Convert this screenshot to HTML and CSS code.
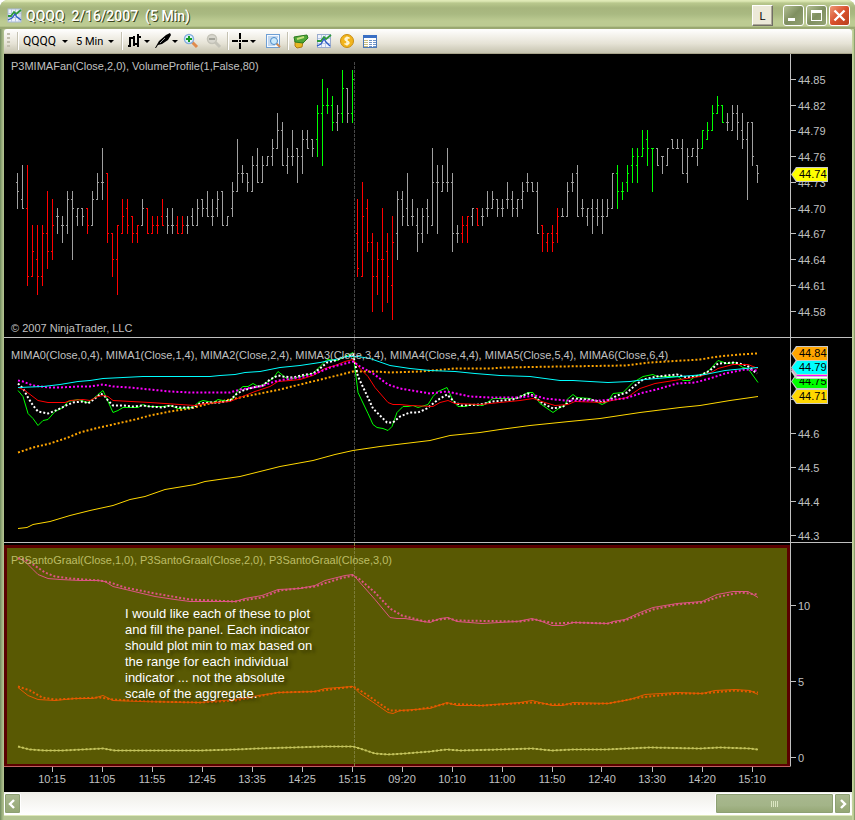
FILE: index.html
```
<!DOCTYPE html>
<html lang="en">
<head>
  <meta charset="UTF-8">
  <title>QQQQ 2/16/2007 (5 Min)</title>
  <link rel="stylesheet" href="styles.css">
</head>
<body>
<div class="window">
  <header class="titlebar">
    <svg class="app-icon" width="15" height="15" viewBox="0 0 15 15">
      <rect x="1" y="1" width="13" height="13" fill="#eef2fb" stroke="#a9b9d8"/>
      <path d="M4.500 1v13M8.500 1v13M12 1v13M1 5.500h13M1 9.500h13" stroke="#b9c8e4" fill="none"/>
      <path d="M1 8L4 8 7 4 9 6 14 2" stroke="#2f9a3a" stroke-width="1.800" fill="none"/>
      <path d="M1 12L5 10 8 6 10 9 14 12" stroke="#2a59c4" stroke-width="1.300" fill="none"/>
    </svg>
    <h1>QQQQ&nbsp; 2/16/2007&nbsp; (5 Min)</h1>
    <button class="link-btn">L</button>
    <button class="win-btn" aria-label="Minimize">
      <svg width="21" height="21" viewBox="0 0 21 21"><rect x="5" y="13" width="7" height="3" fill="#fff"/></svg>
    </button>
    <button class="win-btn" aria-label="Maximize">
      <svg width="21" height="21" viewBox="0 0 21 21"><path d="M5 5h11v11H5zM6 8v7h9V8z" fill="#fff" fill-rule="evenodd"/></svg>
    </button>
    <button class="win-btn close" aria-label="Close">
      <svg width="21" height="21" viewBox="0 0 21 21"><path d="M5.500 5.500l10 10M15.500 5.500l-10 10" stroke="#fff" stroke-width="2.400"/></svg>
    </button>
  </header>

  <nav class="toolbar">
    <span class="grip"></span>
    <span class="sep"></span>
    <label class="drop instrument"><select aria-label="Instrument"><option>QQQQ</option></select></label>
    <label class="drop interval"><select aria-label="Interval"><option>5 Min</option></select></label>
    <span class="sep"></span>
    <button class="tool arrow" aria-label="Chart style">
      <svg width="16" height="16" viewBox="0 0 16 16"><path d="M3 4v10M1 13h2M3 5h4M7 3v10M7 11h3M11 1v13M10 7h2M11 4h3" stroke="#000" stroke-width="2" fill="none"/></svg>
    </button>
    <button class="tool arrow" aria-label="Drawing tools">
      <svg width="16" height="16" viewBox="0 0 16 16"><path d="M0 15L4 8 11 2 15 0 16 2 13 7 7 11 3 12 1 15z" fill="#000"/><path d="M5 10l5-5" stroke="#999" stroke-width="1"/></svg>
    </button>
    <button class="tool" aria-label="Zoom in">
      <svg width="16" height="16" viewBox="0 0 16 16"><path d="M9 9l5 5" stroke="#e08a4c" stroke-width="3"/><circle cx="6" cy="6" r="4.500" fill="#e2f3fd" stroke="#85aede" stroke-width="1.500"/><path d="M6 3v6M3 6h6" stroke="#159a28" stroke-width="2"/></svg>
    </button>
    <button class="tool" aria-label="Zoom out" disabled>
      <svg width="16" height="16" viewBox="0 0 16 16"><path d="M9 9l5 5" stroke="#c4c3b8" stroke-width="3"/><circle cx="6" cy="6" r="4.500" fill="#d8d7ce" stroke="#c4c3b8" stroke-width="1.500"/><path d="M3 6h6" stroke="#a3a39a" stroke-width="2"/></svg>
    </button>
    <span class="sep"></span>
    <button class="tool arrow cross" aria-label="Cross hair">
      <svg width="18" height="16" viewBox="0 0 18 16"><path d="M9 0v6M9 10v6M1 8h6M11 8h6" stroke="#000" stroke-width="2"/><rect x="8" y="7" width="2" height="2"/></svg>
    </button>
    <button class="tool" aria-label="Data box">
      <svg width="16" height="16" viewBox="0 0 16 16"><rect x="1.500" y="1.500" width="13" height="13" fill="#f4f9ff" stroke="#6f9fd4"/><path d="M3 4h10M3 6h3M3 8h3M3 10h3M3 12h7" stroke="#93b7de"/><path d="M11 10l4 4" stroke="#cf8a55" stroke-width="2"/><circle cx="9" cy="8" r="3.500" fill="#cbe9fb" stroke="#4b8ac9"/></svg>
    </button>
    <span class="sep"></span>
    <button class="tool" aria-label="Strategies">
      <svg width="16" height="16" viewBox="0 0 16 16"><path d="M2 8l5-1 3 2-1 5-5 1-2-2z" fill="#e8b823" stroke="#b07c12"/><path d="M1 4l6-1 7-1 1 3-5 5-8-1z" fill="#4ea636" stroke="#2c7a20"/><path d="M4 6l7-2" stroke="#c5e07b" stroke-width="2"/></svg>
    </button>
    <button class="tool" aria-label="Indicators">
      <svg width="16" height="16" viewBox="0 0 16 16"><rect x="1.500" y="1.500" width="13" height="13" fill="#eef2fb" stroke="#9aaccf"/><path d="M5.500 2v12M9.500 2v12M2 5.500h12M2 10.500h12" stroke="#b9c8e4"/><path d="M1 8L5 8 8 4 10 6 15 2" stroke="#2f9a3a" stroke-width="1.800" fill="none"/><path d="M1 13L5 11 8 6 10 9 14 13" stroke="#2a59c4" stroke-width="1.300" fill="none"/></svg>
    </button>
    <button class="tool" aria-label="Account">
      <svg width="16" height="16" viewBox="0 0 16 16"><circle cx="8" cy="8" r="6.500" fill="#f2b51d" stroke="#c98d12"/><path d="M10.500 5.500C9 4 6 4.500 6 6.300 6 8 10 7.700 10 9.800 10 11.500 7 11.800 5.500 10.500M8 3.500v9" stroke="#fff8d8" stroke-width="1.500" fill="none"/></svg>
    </button>
    <button class="tool" aria-label="Properties">
      <svg width="16" height="16" viewBox="0 0 16 16"><rect x="1.500" y="2.500" width="13" height="12" fill="#fff" stroke="#4d79b8"/><rect x="1" y="2" width="14" height="3" fill="#3a6fc4"/><path d="M2 7.500h4M2 9.500h4M2 11.500h4M2 13.500h4" stroke="#c8bd7c"/><path d="M7 7.500h3M7 9.500h3M7 11.500h3M7 13.500h3M11 7.500h3M11 9.500h3M11 11.500h3M11 13.500h3" stroke="#6f93c8"/></svg>
    </button>
  </nav>

  <main class="chart">
    <section class="plot price">
      <svg id="price" viewBox="4 54 786 283" preserveAspectRatio="none"></svg>
      <p class="legend">P3MIMAFan(Close,2,0), VolumeProfile(1,False,80)</p>
      <p class="copyright">© 2007 NinjaTrader, LLC</p>
    </section>
    <div class="axis" id="priceAxis"></div>

    <section class="plot mima">
      <svg id="mima" viewBox="4 338 786 204" preserveAspectRatio="none"></svg>
      <p class="legend">MIMA0(Close,0,4), MIMA1(Close,1,4), MIMA2(Close,2,4), MIMA3(Close,3,4), MIMA4(Close,4,4), MIMA5(Close,5,4), MIMA6(Close,6,4)</p>
    </section>
    <div class="axis" id="mimaAxis"></div>

    <section class="plot graal">
      <svg id="graal" viewBox="4 543 786 223" preserveAspectRatio="none"></svg>
      <p class="legend">P3SantoGraal(Close,1,0), P3SantoGraal(Close,2,0), P3SantoGraal(Close,3,0)</p>
      <p class="note">I would like each of these to plot<br>and fill the panel. Each indicator<br>should plot min to max based on<br>the range for each individual<br>indicator ... not the absolute<br>scale of the aggregate.</p>
    </section>
    <div class="axis last" id="graalAxis"></div>

    <div class="times" id="times"></div>
  </main>

  <div class="scrollbar">
    <button class="scroll-btn" aria-label="Scroll left">
      <svg width="9" height="10" viewBox="0 0 9 10"><path d="M6 1L2 5l4 4" stroke="#fff" stroke-width="2.400" fill="none"/></svg>
    </button>
    <div class="track">
      <div class="thumb"><i></i><i></i><i></i><i></i></div>
    </div>
    <button class="scroll-btn" aria-label="Scroll right">
      <svg width="9" height="10" viewBox="0 0 9 10"><path d="M3 1l4 4-4 4" stroke="#fff" stroke-width="2.400" fill="none"/></svg>
    </button>
  </div>
</div>
<script src="chart.js"></script>
</body>
</html>
```
FILE: styles.css
```
* {
  box-sizing: border-box;
}
body {
  margin: 0;
  background: #fff;
  font-family: "Liberation Sans", Arial, sans-serif;
  font-size: 11px;
}
button, select {
  font: inherit;
  padding: 0;
  border: 0;
  background: none;
}
svg {
  display: block;
}
h1, p {
  margin: 0;
}
.window {
  display: flex;
  flex-direction: column;
  height: 100vh;
  min-height: 600px;
  padding: 0 3px 4px 4px;
  border-radius: 8px 8px 0 0;
  background: linear-gradient(90deg, #6f8a5c, #9cae7e 2px, #b5c693 4px, #b5c693 calc(100% - 3px), #d2dfa6 calc(100% - 2px), #728c5c);
}

/* title bar */
.titlebar {
  display: flex;
  align-items: center;
  flex: none;
  height: 29px;
  margin: 0 -3px 0 -4px;
  padding: 2px 5px 0 7px;
  border-radius: 8px 8px 0 0;
  background: linear-gradient(#dfe9b6 0, #dfe9b6 1px, #b9c88d 3px, #a6b57d 8px, #a9b981 14px, #bccb92 21px, #bccb92 26px, #8d9c66 28px, #a9b47f);
}
.titlebar h1 {
  flex: 1;
  margin-left: 4px;
  font: 500 14px Roboto, sans-serif;
  color: #fff;
  text-shadow: 1px 1px 0 #3a4420;
}
.link-btn {
  width: 21px;
  height: 21px;
  margin-right: 10px;
  border: 1px solid;
  border-color: #fff #716f64 #716f64 #fff;
  background: #ece9d8;
  box-shadow: inset -1px -1px 0 #aca899;
  color: #000;
}
.win-btn {
  width: 21px;
  height: 21px;
  margin-left: 2px;
  border: 1px solid #fff;
  border-radius: 3px;
  background: linear-gradient(135deg, #b4c094, #7f8f60 50%, #93a273);
  overflow: hidden;
}
.win-btn svg {
  margin: -1px;
}
.link-btn + .win-btn {
  margin-left: 0;
}
.win-btn.close {
  background: linear-gradient(135deg, #ee9a78, #d9502c 50%, #b8401c);
}

/* toolbar */
.toolbar {
  display: flex;
  align-items: center;
  flex: none;
  height: 25px;
  padding-left: 3px;
  border-bottom: 1px solid #a9a58c;
  border-radius: 3px 3px 0 0;
  background: linear-gradient(#fff, #f3f1ea 30%, #e6e3d6 60%, #c6c3af);
  font-family: Roboto, sans-serif;
  font-size: 12px;
}
.grip {
  width: 3px;
  height: 16px;
  margin-right: 7px;
  background: repeating-linear-gradient(#c2bfae 0 2px, transparent 2px 4px);
}
.sep {
  width: 2px;
  height: 18px;
  background: #c5c2b2;
  border-right: 1px solid #fff;
}
.drop {
  display: flex;
  align-items: center;
  justify-content: space-between;
}
.drop select {
  appearance: none;
  color: #000;
}
.drop::after, .arrow::after {
  content: "";
  border: 3px solid transparent;
  border-top-color: #000;
  border-bottom: 0;
}
.instrument {
  width: 45px;
  margin-left: 4px;
}
.interval {
  width: 38px;
  margin: 0 7px 0 8px;
  font-size: 11px;
}
.tool {
  display: flex;
  align-items: center;
  width: 23px;
  height: 20px;
  padding-left: 4px;
}
.tool.arrow {
  width: 28px;
  gap: 1px;
}
.tool.arrow.cross {
  padding-left: 2px;
  width: 32px;
}
.tool:disabled {
  width: 25px;
}
.cross + .tool {
  width: 26px;
}

/* chart */
.chart {
  display: grid;
  flex: 1;
  min-height: 0;
  grid-template-columns: 1fr 62px;
  grid-template-rows: 284fr 205fr 224fr 25px;
  background: #000;
  color: #c0c0c0;
}
.plot {
  position: relative;
  min-height: 0;
  overflow: hidden;
  border-bottom: 1px solid #c0c0c0;
}
.plot svg {
  position: absolute;
  inset: 0;
  width: 100%;
  height: 100%;
}
.legend {
  position: relative;
  padding: 11px 0 0 7px;
  line-height: 13px;
  white-space: nowrap;
}
.price .legend {
  padding-top: 6px;
}
.copyright {
  position: absolute;
  left: 7px;
  bottom: 2px;
  line-height: 13px;
}
.graal {
  border-bottom-color: #c06060;
}
.graal .legend {
  color: #bdbd66;
}
.note {
  position: relative;
  padding: 39px 0 0 121px;
  color: #fff;
  font-size: 13px;
  line-height: 16px;
  text-shadow: 3px 3px 3px rgba(0, 0, 0, 0.4);
}
.axis {
  position: relative;
  border-left: 1px solid #c0c0c0;
  border-bottom: 1px solid #c0c0c0;
}
.axis.last {
  border-bottom-color: transparent;
}
.tick {
  position: absolute;
  left: 0;
  display: flex;
  align-items: center;
  gap: 2px;
  height: 13px;
  margin-top: -6px;
}
.tick::before {
  content: "";
  width: 5px;
  height: 1px;
  background: #c0c0c0;
}
.tag {
  position: absolute;
  left: 0;
  isolation: isolate;
  width: 37px;
  height: 15px;
  margin-top: -7px;
  padding-left: 8px;
  line-height: 15px;
  background: #c8c8c8;
  color: #000;
  clip-path: polygon(0 50%, 5px 0, 100% 0, 100% 100%, 5px 100%);
}
.tag::before {
  content: "";
  position: absolute;
  z-index: -1;
  inset: 1px;
  background: var(--fill);
  clip-path: polygon(0 50%, 5px 0, 100% 0, 100% 100%, 5px 100%);
}
.times {
  position: relative;
}
.time {
  position: absolute;
  top: 0;
  display: flex;
  flex-direction: column;
  align-items: center;
  width: 39px;
  margin-left: -20px;
  line-height: 13px;
}
.time::before {
  content: "";
  width: 1px;
  height: 5px;
  margin-bottom: 1px;
  background: #c0c0c0;
}

/* scroll bar */
.scrollbar {
  display: flex;
  flex: none;
  height: 24px;
  padding: 1px 1px 1px 0;
  border-bottom: 1px solid #dfe8bc;
  background: linear-gradient(#efeee8, #fff);
}
.scroll-btn {
  display: flex;
  align-items: center;
  justify-content: center;
  width: 17px;
  border: 1px solid #fff;
  border-radius: 2px;
  background: linear-gradient(#aab990, #93a673);
  box-shadow: inset 0 0 0 1px #8da073;
}
.track {
  flex: 1;
}
.thumb {
  display: flex;
  align-items: center;
  justify-content: center;
  gap: 1px;
  width: 14.6%;
  height: 100%;
  margin-left: auto;
  border: 1px solid #fff;
  border-radius: 2px;
  background: linear-gradient(#a9b88f, #a3b488 60%, #94a673);
  box-shadow: inset 0 0 0 1px #8da073;
}
.thumb i {
  width: 1px;
  height: 6px;
  background: #dce6c3;
}
```
FILE: chart.js
```
const NS = "http://www.w3.org/2000/svg";
const GRAY = "#a0a0a0", RED = "#ff0000", GREEN = "#00ff00";

// open high low close in cents above 44.00, then r / g for coloured bars
const bars = `73 74 70 72,71 75 70 70,70 75 61 62 r,62 68 62 65 r,64 68 60 62 r,62 68 61 67 r,67 72 63 65 r,65 71 64 68 r,
69 70 67 69,68 69 66 68,68 72 67 71,71 72 64 70,69 70 68 70,70 70 68 69,70 70 67 68 r,68 72 68 71,71 74 71 73,73 77 71 73,
74 74 66 67 r,67 67 62 64 r,64 68 60 68 r,67 71 67 69 r,70 71 67 68 r,69 69 66 67 r,67 68 66 68 r,68 71 68 70,70 70 67 67 r,
67 69 67 68 r,68 69 67 68 r,69 71 68 68 r,69 70 67 68,68 70 67 68,68 69 67 67 r,67 69 67 68 r,68 69 67 68,69 70 68 68,
68 71 68 70,71 71 69 70,70 72 69 69,69 71 68 69,70 72 69 71,72 72 68 68,68 69 68 69,70 73 69 72,72 78 72 74,74 75 73 74,
74 74 72 73,72 76 72 75,75 77 73 73,73 76 73 75,75 76 75 76,76 78 75 77,77 81 77 79,79 80 75 75,75 77 74 76,76 79 75 76,
77 77 73 76,76 79 74 78,78 79 77 77,78 78 76 77,78 82 76 81 g,81 85 75 82 g,82 84 81 82 g,82 83 79 80 g,80 82 79 81,
81 86 80 84 g,84 84 80 81,81 86 80 85 g,67 71 62 63 r,62 73 62 69 r,70 71 65 66 r,66 67 58 62 r,62 66 60 64 r,64 70 58 64 r,
65 67 59 62 r,61 69 57 66 r,67 72 64 71,71 72 68 69,70 74 68 68,69 71 68 69,68 70 65 67,67 70 66 69,70 71 67 69,68 77 68 73,
73 75 67 73,72 75 72 73,73 77 72 73,73 74 65 67,67 68 66 67,67 69 66 68 r,68 69 66 69 r,69 70 68 70,70 70 68 68 r,69 70 68 69,
70 72 69 70,70 72 70 71,71 71 69 70,70 71 69 70,71 73 70 71,71 72 69 70,70 71 69 71,71 73 70 72,73 74 72 73,73 73 72 72,
72 73 67 67,68 68 65 67 r,66 67 65 67 r,67 68 65 66 r,67 70 66 69 r,69 70 69 69,69 73 69 72,73 74 72 73,74 75 69 69,
70 71 69 70,69 70 68 70,70 71 67 69,70 71 68 69,69 71 67 69,69 71 69 70,70 74 70 74,74 75 70 72 g,72 73 71 72 g,73 75 72 74 g,
75 77 73 76 g,75 77 73 76 g,76 79 76 77 g,78 79 75 77 g,77 77 72 77 g,77 77 75 75,76 76 74 76,75 77 75 77,78 78 77 77,
77 78 77 77,77 78 74 74,74 77 73 76,76 77 76 77,76 78 75 77,77 79 77 79 g,78 80 78 79 g,79 82 79 81 g,81 83 81 82 g,
82 82 80 80 g,80 81 79 80,79 82 79 81,81 82 78 80,79 81 77 78,78 80 71 80,80 80 75 76,75 75 73 74`.split(",");

function add(svg, tag, attrs) {
  const el = document.createElementNS(NS, tag);
  for (const key in attrs) el.setAttribute(key, attrs[key]);
  svg.appendChild(el);
}

function line(svg, color, dotted, points) {
  const attrs = { points, fill: "none", stroke: color, "stroke-width": dotted ? 2 : 1, transform: "translate(0 .5)" };
  if (dotted) attrs["stroke-dasharray"] = "2 2";
  add(svg, "polyline", attrs);
}

function sessionBreak(svg, top, bottom, color) {
  add(svg, "path", { d: `M354.5 ${top}V${bottom}`, stroke: color, "stroke-dasharray": "3 1" });
}

// price panel
const price = document.getElementById("price");
sessionBreak(price, 62, 337, "#484848");
const priceY = p => Math.floor(79.5 + (85 - p) * 8.583);
bars.forEach((bar, i) => {
  const [o, h, l, c, mark] = bar.trim().split(" ");
  const x = 17 + i * 5;
  add(price, "path", {
    d: `M${x + 0.5} ${priceY(h)}V${priceY(l) + 1}M${x - 1} ${priceY(o) + 0.5}h1M${x + 1} ${priceY(c) + 0.5}h1`,
    stroke: mark === "r" ? RED : mark === "g" ? GREEN : GRAY,
    "shape-rendering": "crispEdges"
  });
});

// MIMA panel
const mima = document.getElementById("mima");
sessionBreak(mima, 338, 542, "#484848");
line(mima, "#ffd700", false, "18,528 27,527 33,524 50,521 70,515 90,510 113,505 130,499 145,496 165,489 195,484 205,481 240,476 260,471 280,466 313,460 335,454 353,450 380,446 430,440 450,435 480,432 500,429 530,425 569,421 600,418 640,412 680,407 700,405 730,400 758,396");
line(mima, "#ffa500", true, "18,452 33,447 50,443 68,437 80,432 95,428 113,424 135,419 150,415 170,411 190,408 210,403 225,400 240,397 260,393 280,389 300,384 325,378 353,371 375,371 390,372 420,371 455,368 490,368 505,367 560,366 625,365 650,362 700,359 718,356 740,354 757,353");
line(mima, "#00ff00", false, "18,390 23,396 28,413 33,418 38,425 43,420 48,419 55,411 63,407 68,401 78,399 88,402 95,397 98,394 103,390 113,412 118,410 123,407 138,407 143,404 148,406 163,406 170,405 178,408 193,407 198,402 203,400 213,402 218,399 228,401 233,398 238,390 243,386 248,386 253,383 258,386 263,384 268,381 273,378 278,371 288,379 313,373 321,365 327,359 337,360 343,357 353,352 358,392 368,413 373,424 377,427 383,428 388,430 392,426 397,412 403,406 408,406 413,405 418,407 428,404 433,396 438,391 447,387 453,400 458,406 465,406 472,404 483,405 493,398 517,398 528,392 533,392 540,403 553,412 560,407 565,405 567,399 573,394 577,397 590,398 602,404 608,401 613,393 623,392 628,387 633,382 643,376 653,374 657,376 678,376 683,380 690,380 695,376 707,372 718,360 727,363 735,362 743,367 748,368 758,382");
line(mima, "#ffffff", true, "18,383 23,388 28,397 33,405 38,411 48,413 58,409 66,405 73,402 83,401 88,403 95,398 101,393 105,396 108,400 113,405 123,405 133,406 143,405 150,406 163,407 170,405 178,407 193,407 200,403 210,402 220,402 230,400 237,393 243,390 253,387 263,385 270,379 278,375 283,376 293,377 305,374 313,373 320,368 327,362 335,360 343,357 353,354 358,376 367,395 373,408 380,415 387,422 393,422 400,416 410,412 418,412 427,408 437,400 447,394 455,402 462,405 480,404 493,401 513,399 528,393 533,395 543,403 553,408 563,406 567,403 573,398 590,399 603,402 610,399 617,395 627,392 635,385 643,379 657,376 677,374 687,377 700,375 710,370 718,363 735,362 747,365 757,373");
line(mima, "#ff0000", false, "18,387 25,390 38,400 48,402 65,402 70,400 83,399 90,400 98,396 103,395 108,396 113,400 150,402 180,404 195,405 205,403 230,401 240,397 255,391 270,386 278,381 290,380 300,379 313,375 325,368 335,365 345,361 353,359 360,368 368,376 375,387 388,402 393,404 400,404 410,405 433,406 440,402 448,400 455,403 480,404 500,402 520,400 533,398 545,402 555,405 568,404 575,401 603,402 612,400 627,397 640,388 655,383 680,379 700,376 713,371 718,368 733,364 748,364 758,368");
line(mima, "#ff00ff", true, "18,380 23,381 33,385 48,387 60,387 78,386 90,386 103,384 113,386 130,387 150,389 170,391 190,392 230,392 240,389 260,386 278,380 300,377 313,374 330,367 353,361 360,366 373,373 388,384 400,388 430,393 447,391 470,396 490,397 520,397 535,395 545,398 565,400 600,400 625,398 640,393 660,388 677,383 695,382 710,378 725,373 745,369 758,370");
line(mima, "#00ffff", false, "18,387 43,386 60,384 78,381 90,380 103,378 123,377 143,376 210,376 220,375 235,374 245,372 260,371 280,367 300,365 320,362 335,359 347,356 358,356 370,358 390,365 410,368 430,370 455,371 475,373 500,375 530,376 545,378 560,380 573,380 590,381 608,382 630,381 645,379 680,376 705,374 725,370 745,368 758,367");

// SantoGraal panel
const graal = document.getElementById("graal");
add(graal, "path", { d: "M4 545h786v221H4z", fill: "#5a0000" });
add(graal, "path", { d: "M7 548h780v216H7z", fill: "#595903" });
sessionBreak(graal, 543, 766, "#7c7c38");
line(graal, "#dd5583", false, "18,557 25,561 33,569 38,574 48,578 60,579 80,580 98,580 105,581 113,586 130,590 155,596 175,599 190,601 235,601 245,598 262,595 278,589 300,588 315,585 325,580 345,575 353,574 360,582 375,599 390,617 397,618 405,618 430,622 440,618 448,617 457,621 482,623 517,621 532,618 542,621 552,625 563,625 573,622 608,623 613,621 625,619 640,612 653,607 677,603 702,601 717,594 733,591 748,591 758,597");
line(graal, "#dd5583", true, "18,558 25,559 33,564 45,572 55,576 70,578 100,580 110,582 125,587 155,593 190,599 235,601 262,597 280,590 315,586 340,578 353,575 360,579 375,592 390,608 402,615 425,621 448,618 457,620 520,621 535,619 555,623 575,622 608,623 625,620 653,609 677,604 702,602 720,596 740,592 758,594");
line(graal, "#e65a00", false, "18,687 28,695 38,699 55,700 75,698 93,698 103,695 113,700 140,701 200,702 235,699 258,695 278,692 315,691 325,688 353,686 360,693 375,703 388,712 393,713 400,710 430,708 447,702 457,705 482,705 520,702 532,700 552,705 563,705 573,702 608,703 630,699 645,694 677,692 702,693 715,690 735,689 750,690 758,694");
line(graal, "#e65a00", true, "18,686 30,690 42,697 55,699 75,698 100,697 113,699 150,701 200,702 235,700 258,696 278,692 315,691 330,689 353,686 365,693 378,702 390,710 410,710 430,707 447,703 482,705 532,702 552,704 608,703 640,697 677,693 702,693 735,690 758,692");
const flat = "18,746 30,749 45,750 62,750 103,748 115,750 200,750 235,749 258,748 325,746 353,746 360,748 375,753 388,754 405,753 430,751 447,749 460,750 500,749 532,748 552,750 573,749 605,749 650,747 700,748 720,747 750,748 758,749";
line(graal, "#c3c35c", false, flat);
line(graal, "#c3c35c", true, flat);

// value axes: top and height are those of the panel's viewBox
function tick(id, text, y, top, height) {
  const el = document.createElement("span");
  el.className = "tick";
  el.textContent = text;
  el.style.top = (y - top) / height * 100 + "%";
  document.getElementById(id).appendChild(el);
}

function tag(id, text, y, top, height, fill) {
  const el = document.createElement("span");
  el.className = "tag";
  el.textContent = text;
  el.style.top = (y - top) / height * 100 + "%";
  el.style.setProperty("--fill", fill);
  document.getElementById(id).appendChild(el);
}

for (let p = 85; p >= 58; p -= 3) tick("priceAxis", "44." + p, priceY(p), 54, 283);
tag("priceAxis", "44.74", 174, 54, 283, "#ffff00");

[7, 6, 5, 4, 3].forEach((v, i) => tick("mimaAxis", "44." + v, 399 + i * 34, 338, 204));
tag("mimaAxis", "44.71", 396, 338, 204, "#ffd700");
tag("mimaAxis", "44.75", 381, 338, 204, "#00ff00");
tag("mimaAxis", "", 371, 338, 204, "#ffffff");
tag("mimaAxis", "", 369, 338, 204, "#ff00ff");
tag("mimaAxis", "44.79", 367, 338, 204, "#00ffff");
tag("mimaAxis", "44.84", 353, 338, 204, "#ffa500");

[10, 5, 0].forEach((v, i) => tick("graalAxis", v, 605 + i * 76, 543, 223));

const times = ["10:15", "11:05", "11:55", "12:45", "13:35", "14:25", "15:15", "09:20", "10:10", "11:00", "11:50", "12:40", "13:30", "14:20", "15:10"];
times.forEach((text, i) => {
  const el = document.createElement("span");
  el.className = "time";
  el.textContent = text;
  el.style.left = (48.5 + i * 50) / 786 * 100 + "%";
  document.getElementById("times").appendChild(el);
});
```
